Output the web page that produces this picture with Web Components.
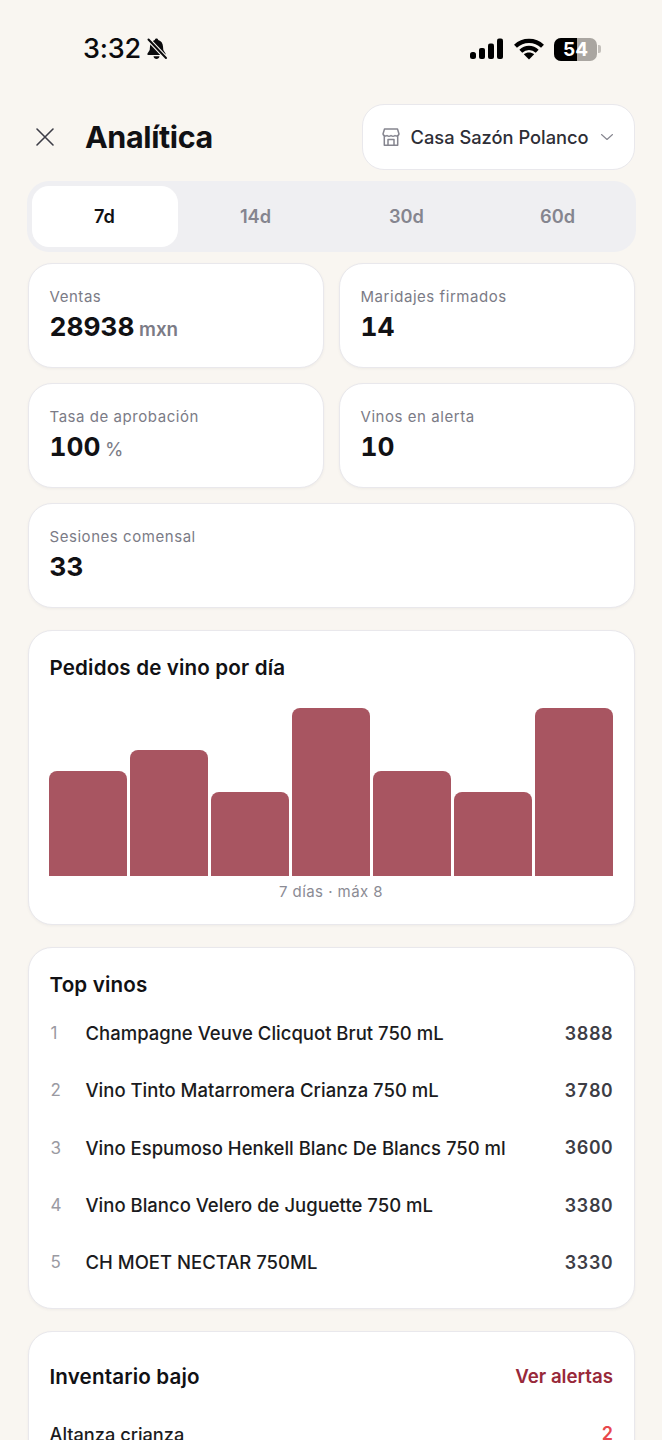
<!DOCTYPE html>
<html lang="es">
<head>
<meta charset="utf-8">
<title>Analítica</title>
<style>
  html, body { margin: 0; height: 1440px; overflow: hidden; background: #f9f6f1; }
  body { font-family: Inter, "Liberation Sans", sans-serif; color: #111114; }
</style>
</head>
<body>
<analytics-page>
  <status-bar time="3:32" battery="54"></status-bar>
  <app-header title="Analítica" place="Casa Sazón Polanco"></app-header>
  <range-tabs options="7d,14d,30d,60d" active="7d"></range-tabs>
  <stat-grid>
    <stat-card label="Ventas" value="28938" unit="mxn"></stat-card>
    <stat-card label="Maridajes firmados" value="14"></stat-card>
    <stat-card label="Tasa de aprobación" value="100" unit="%" thin></stat-card>
    <stat-card label="Vinos en alerta" value="10"></stat-card>
    <stat-card label="Sesiones comensal" value="33" wide></stat-card>
  </stat-grid>
  <bar-chart title="Pedidos de vino por día" values="5,6,4,8,5,4,8" max="8" caption="7 días · máx 8"></bar-chart>
  <top-list title="Top vinos">
    <top-row rank="1" name="Champagne Veuve Clicquot Brut 750 mL" amount="3888"></top-row>
    <top-row rank="2" name="Vino Tinto Matarromera Crianza 750 mL" amount="3780"></top-row>
    <top-row rank="3" name="Vino Espumoso Henkell Blanc De Blancs 750 ml" amount="3600"></top-row>
    <top-row rank="4" name="Vino Blanco Velero de Juguette 750 mL" amount="3380"></top-row>
    <top-row rank="5" name="CH MOET NECTAR 750ML" amount="3330"></top-row>
  </top-list>
  <low-stock title="Inventario bajo" link="Ver alertas">
    <low-row name="Altanza crianza" qty="2"></low-row>
  </low-stock>
</analytics-page>

<script>
const cardCss = `
  background: #fff;
  border: 1.5px solid #e9e8ec;
  border-radius: 24px;
  box-shadow: 0 1px 3px rgba(30, 30, 50, 0.05);
  box-sizing: border-box;
`;

class AnalyticsPage extends HTMLElement {
  constructor() {
    super();
    this.attachShadow({ mode: "open" });
    this.shadowRoot.innerHTML = `
      <style>
        :host { display: block; height: 1440px; overflow: hidden; }
        .content { display: flex; flex-direction: column; }
      </style>
      <div class="content"><slot></slot></div>
    `;
  }
}

class StatusBar extends HTMLElement {
  connectedCallback() {
    this.attachShadow({ mode: "open" });
    this.shadowRoot.innerHTML = `
      <style>
        :host { display: flex; align-items: center; justify-content: space-between; height: 50px; padding: 24px 61px 0 83px; }
        .left, .right { display: flex; align-items: center; }
        .time { font: 500 27px/32px Inter, sans-serif; color: #0b0b0d; letter-spacing: -0.2px; }
        .bell { margin-left: 4px; }
        .right { gap: 10px; }
        .wrap { display: flex; align-items: center; }
        .batt { position: relative; width: 43px; height: 23px; border-radius: 7px; overflow: hidden; background: #aaa6a1; font: 700 19px/23px Inter, sans-serif; color: #fff; text-align: center; }
        .fill { position: absolute; left: 0; top: 0; bottom: 0; width: 23px; background: #000; }
        .batt span { position: relative; }
        .cap { width: 3px; height: 8px; margin-left: 1px; border-radius: 0 2px 2px 0; background: #c4c0bb; }
      </style>
      <div class="left">
        <span class="time">${this.getAttribute("time")}</span>
        <svg class="bell" width="23" height="24" viewBox="0 0 23 24">
          <path d="M11.5 1.5c1 0 1.6.7 1.7 1.6 3 .8 4.6 3.3 4.8 6.3l.3 3.6 2.2 3.4c.4.7 0 1.6-.9 1.6H3.4c-.9 0-1.3-.9-.9-1.6l2.2-3.4.3-3.6c.2-3 1.9-5.5 4.8-6.3.1-.9.7-1.6 1.7-1.6z" fill="#0b0b0d"/>
          <path d="M8.5 19.2h6c-.3 1.7-1.5 2.8-3 2.8s-2.7-1.1-3-2.8z" fill="#0b0b0d"/>
          <path d="M3.5 2.5 21 21" stroke="#f9f6f1" stroke-width="4.2"/>
          <path d="M3.5 2.5 21 21" stroke="#0b0b0d" stroke-width="2" stroke-linecap="round"/>
        </svg>
      </div>
      <div class="right">
        <svg width="34" height="22" viewBox="0 0 34 22" fill="#000">
          <rect x="0" y="14" width="6" height="7" rx="2.5"/>
          <rect x="9" y="10" width="6" height="11" rx="2"/>
          <rect x="18" y="5.5" width="6" height="15.5" rx="2"/>
          <rect x="27" y="0.5" width="6" height="20.5" rx="2"/>
        </svg>
        <svg width="30" height="22" viewBox="0 0 30 22" fill="none" stroke="#000" stroke-width="4.2">
          <path d="M1.5 8.2C9 1 21 1 28.5 8.2"/>
          <path d="M6.8 13.2C11.5 8.8 18.5 8.8 23.2 13.2"/>
          <path d="M15 21.5 9.8 16.3C12.8 13.8 17.2 13.8 20.2 16.3Z" fill="#000" stroke="none"/>
        </svg>
        <div class="wrap">
          <div class="batt"><div class="fill"></div><span>${this.getAttribute("battery")}</span></div>
          <div class="cap"></div>
        </div>
      </div>
    `;
  }
}

class AppHeader extends HTMLElement {
  connectedCallback() {
    this.attachShadow({ mode: "open" });
    this.shadowRoot.innerHTML = `
      <style>
        :host { display: flex; align-items: center; justify-content: space-between; margin-top: 30px; padding: 0 27px 0 35px; height: 66px; }
        .left { display: flex; align-items: center; gap: 30px; }
        svg { display: block; flex: none; }
        h1 { margin: 0; font: 700 30.5px/40px Inter, sans-serif; letter-spacing: -0.4px; color: #111114; }
        .picker { ${cardCss} border-radius: 22px; box-shadow: none; width: 273px; height: 66px; display: flex; align-items: center; padding: 0 20px 0 18px; }
        .name { font: 500 18.3px/24px Inter, sans-serif; color: #2e2e36; margin-left: 9.5px; flex: 1; white-space: nowrap; }
      </style>
      <div class="left">
        <svg width="20" height="20" viewBox="0 0 20 20" fill="none" stroke="#3d3d47" stroke-width="1.6" stroke-linecap="round"><path d="M2 2 18 18M18 2 2 18"/></svg>
        <h1>${this.getAttribute("title")}</h1>
      </div>
      <div class="picker">
        <svg width="20" height="20" viewBox="0 0 20 20" fill="none" stroke="#85858f" stroke-width="1.5" stroke-linejoin="round">
          <path d="M3.5 2h13l1.5 5a2.6 2.6 0 0 1-4 1.5 3.4 3.4 0 0 1-4 0 3.4 3.4 0 0 1-4 0A2.6 2.6 0 0 1 2 7z"/>
          <path d="M3.3 9v9.2h13.4V9"/>
          <path d="M7 18v-5.5h6V18"/>
        </svg>
        <span class="name">${this.getAttribute("place")}</span>
        <svg width="14" height="14" viewBox="0 0 14 14" fill="none" stroke="#85858f" stroke-width="1.1" stroke-linecap="round" stroke-linejoin="round"><path d="M1.5 4.5 7 9.5 12.5 4.5"/></svg>
      </div>
    `;
  }
}

class RangeTabs extends HTMLElement {
  connectedCallback() {
    const active = this.getAttribute("active");
    const tabs = this.getAttribute("options").split(",").map((o) =>
      `<div class="tab${o === active ? " on" : ""}">${o}</div>`).join("");
    this.attachShadow({ mode: "open" });
    this.shadowRoot.innerHTML = `
      <style>
        :host { display: grid; grid-template-columns: repeat(4, 1fr); gap: 5px; margin: 11px 26px 0 27px; padding: 5px; height: 71px; box-sizing: border-box; background: #efeff2; border-radius: 22px; }
        .tab { display: flex; align-items: center; justify-content: center; padding: 0 1px 1px 0; border-radius: 17px; font: 600 18.2px/22px Inter, sans-serif; color: #85858f; }
        .on { background: #fff; color: #111114; }
      </style>
      ${tabs}
    `;
  }
}

class StatGrid extends HTMLElement {
  constructor() {
    super();
    this.attachShadow({ mode: "open" });
    this.shadowRoot.innerHTML = `
      <style>
        :host { display: grid; grid-template-columns: 1fr 1fr; gap: 15px; margin: 11px 27.5px 0 27.5px; }
      </style>
      <slot></slot>
    `;
  }
}

class StatCard extends HTMLElement {
  connectedCallback() {
    const unit = this.getAttribute("unit");
    this.attachShadow({ mode: "open" });
    this.shadowRoot.innerHTML = `
      <style>
        :host { ${cardCss} display: block; height: 105px; padding: 22.5px 21px 0; }
        :host([wide]) { grid-column: 1 / -1; }
        .label { font: 400 15px/20px Inter, sans-serif; color: #7b7b86; letter-spacing: 0.55px; }
        .value { margin-top: 2.5px; font: 700 26.3px/36px Inter, sans-serif; font-variant-numeric: tabular-nums; color: #111114; white-space: nowrap; }
        .unit { font: 600 18.8px/20px Inter, sans-serif; color: #7b7b86; margin-left: 4.5px; }
        :host([thin]) .unit { font-weight: 400; }
      </style>
      <div class="label">${this.getAttribute("label")}</div>
      <div class="value">${this.getAttribute("value")}${unit ? `<span class="unit">${unit}</span>` : ""}</div>
    `;
  }
}

class BarChart extends HTMLElement {
  connectedCallback() {
    const max = Number(this.getAttribute("max"));
    const bars = this.getAttribute("values").split(",").map((v) =>
      `<div class="bar" style="height:${(Number(v) / max) * 100}%"></div>`).join("");
    this.attachShadow({ mode: "open" });
    this.shadowRoot.innerHTML = `
      <style>
        :host { ${cardCss} display: block; height: 295px; margin: 22px 27.5px 0 27.5px; padding: 22px 20.5px 0; }
        h2 { margin: 0 0 0 .5px; font: 600 20.6px/30px Inter, sans-serif; letter-spacing: 0.15px; color: #111114; }
        .bars { display: grid; grid-template-columns: repeat(7, 1fr); gap: 3px; align-items: end; height: 168px; margin-top: 25px; }
        .bar { background: #a85561; border-radius: 8px 8px 0 0; }
        .cap { margin-top: 6px; text-align: center; font: 400 15px/20px Inter, sans-serif; color: #8b8b94; letter-spacing: 0.45px; }
      </style>
      <h2>${this.getAttribute("title")}</h2>
      <div class="bars">${bars}</div>
      <div class="cap">${this.getAttribute("caption")}</div>
    `;
  }
}

class TopList extends HTMLElement {
  connectedCallback() {
    this.attachShadow({ mode: "open" });
    this.shadowRoot.innerHTML = `
      <style>
        :host { ${cardCss} display: block; height: 362px; margin: 22px 27.5px 0 27.5px; padding: 22px 20.5px 0; }
        h2 { margin: 0 0 4.5px .5px; font: 600 20.6px/30px Inter, sans-serif; letter-spacing: 0.15px; color: #111114; }
      </style>
      <h2>${this.getAttribute("title")}</h2>
      <slot></slot>
    `;
  }
}

class TopRow extends HTMLElement {
  connectedCallback() {
    this.attachShadow({ mode: "open" });
    this.shadowRoot.innerHTML = `
      <style>
        :host { display: flex; align-items: center; height: 57.3px; }
        .rank { width: 35px; padding-left: 1.5px; font: 400 17px/22px Inter, sans-serif; color: #9a9aa2; }
        .name { flex: 1; font: 500 18.5px/24px Inter, sans-serif; color: #1b1b20; white-space: nowrap; }
        .amount { padding-top: 1px; font: 600 18px/24px Inter, sans-serif; font-variant-numeric: tabular-nums; color: #3d3d45; letter-spacing: 0.4px; }
      </style>
      <span class="rank">${this.getAttribute("rank")}</span>
      <span class="name">${this.getAttribute("name")}</span>
      <span class="amount">${this.getAttribute("amount")}</span>
    `;
  }
}

class LowStock extends HTMLElement {
  connectedCallback() {
    this.attachShadow({ mode: "open" });
    this.shadowRoot.innerHTML = `
      <style>
        :host { ${cardCss} display: block; height: 200px; margin: 22px 27.5px 0 27.5px; padding: 30px 20.5px 0; }
        .top { display: flex; align-items: center; justify-content: space-between; margin-bottom: 29.5px; }
        h2 { margin: 0 0 0 .5px; font: 600 20.6px/30px Inter, sans-serif; letter-spacing: 0.15px; color: #111114; }
        a { font: 600 18.7px/24px Inter, sans-serif; color: #98293a; }
      </style>
      <div class="top">
        <h2>${this.getAttribute("title")}</h2>
        <a>${this.getAttribute("link")}</a>
      </div>
      <slot></slot>
    `;
  }
}

class LowRow extends HTMLElement {
  connectedCallback() {
    this.attachShadow({ mode: "open" });
    this.shadowRoot.innerHTML = `
      <style>
        :host { display: flex; align-items: center; justify-content: space-between; height: 24px; }
        .name { margin-left: .5px; font: 500 18.2px/24px Inter, sans-serif; color: #1b1b20; }
        .qty { font: 600 18px/24px Inter, sans-serif; color: #e8474c; }
      </style>
      <span class="name">${this.getAttribute("name")}</span>
      <span class="qty">${this.getAttribute("qty")}</span>
    `;
  }
}

customElements.define("analytics-page", AnalyticsPage);
customElements.define("status-bar", StatusBar);
customElements.define("app-header", AppHeader);
customElements.define("range-tabs", RangeTabs);
customElements.define("stat-grid", StatGrid);
customElements.define("stat-card", StatCard);
customElements.define("bar-chart", BarChart);
customElements.define("top-list", TopList);
customElements.define("top-row", TopRow);
customElements.define("low-stock", LowStock);
customElements.define("low-row", LowRow);
</script>
</body>
</html>
